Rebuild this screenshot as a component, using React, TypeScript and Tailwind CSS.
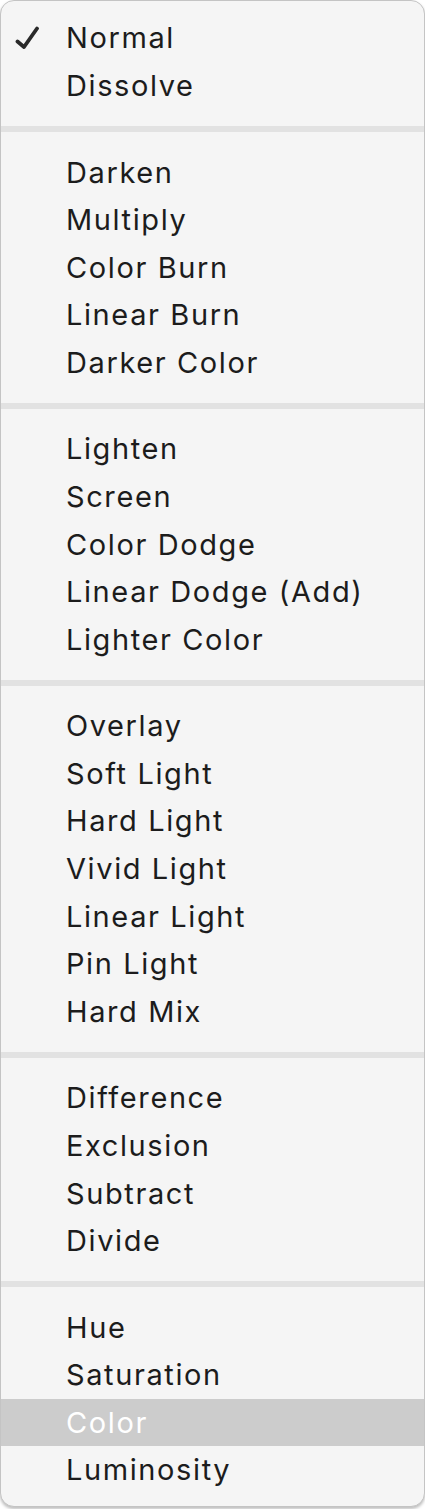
import React from "react";

const groups: string[][] = [
  ["Normal", "Dissolve"],
  ["Darken", "Multiply", "Color Burn", "Linear Burn", "Darker Color"],
  ["Lighten", "Screen", "Color Dodge", "Linear Dodge (Add)", "Lighter Color"],
  ["Overlay", "Soft Light", "Hard Light", "Vivid Light", "Linear Light", "Pin Light", "Hard Mix"],
  ["Difference", "Exclusion", "Subtract", "Divide"],
  ["Hue", "Saturation", "Color", "Luminosity"],
];

function Check() {
  return (
    <svg width="24" height="24" viewBox="0 0 24 24" className="absolute left-[14px] top-[12px]">
      <path d="M2.5 15.5 L9 21 L22 2.5" fill="none" stroke="#2a2a2a" strokeWidth="3.8" strokeLinecap="round" strokeLinejoin="round" />
    </svg>
  );
}

function Row({ label }: { label: string }) {
  const checked = label === "Normal";
  const active = label === "Color";
  return (
    <div
      className={
        "relative flex h-[47.55px] items-center pl-[65px] text-[29px] leading-none tracking-[1.6px] " +
        (active ? "bg-[#cccccc] text-white" : "text-[#1c1c1c]")
      }
    >
      {checked && <Check />}
      <span>{label}</span>
    </div>
  );
}

export default function App() {
  return (
    <div className="h-[1509px] w-[425px] bg-white">
      <div
        className="flex h-[1507px] w-[425px] flex-col overflow-hidden rounded-[14px] border border-[#c4c4c4] bg-[#f5f5f5] pt-[13px] shadow-[0_2px_3px_rgba(0,0,0,0.25)]"
        style={{ fontFamily: "Inter, 'Noto Sans', sans-serif" }}
      >
        {groups.map((g, gi) => (
          <div key={gi} className="flex flex-col">
            {gi > 0 && (
              <div className="flex h-[39.2px] items-center">
                <div className="h-[6px] w-full bg-[#e2e2e2]" />
              </div>
            )}
            {g.map((l) => (
              <Row key={l} label={l} />
            ))}
          </div>
        ))}
      </div>
    </div>
  );
}
